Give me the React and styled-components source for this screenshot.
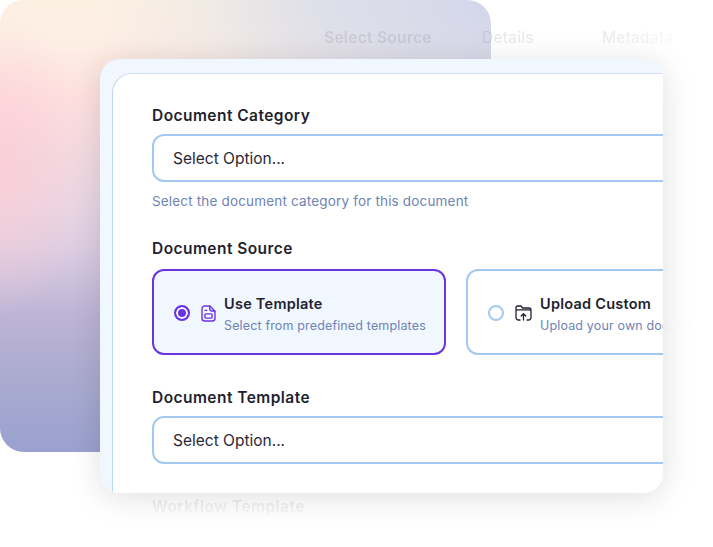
import React from "react";
import styled, { createGlobalStyle } from "styled-components";

const GlobalStyle = createGlobalStyle`
  html, body {
    margin: 0;
    padding: 0;
    background: #fff;
  }
  body {
    font-family: "Inter", "Noto Sans", sans-serif;
    color: #231f2e;
  }
`;

const FileIcon = () => (
  <svg width="15" height="17" viewBox="0 0 15 17" fill="none" stroke="#6a35e0" strokeWidth="1.4" strokeLinecap="round" strokeLinejoin="round">
    <path d="M8.8 1H3.8A2.8 2.8 0 0 0 1 3.8v9.4A2.8 2.8 0 0 0 3.8 16h7.4a2.8 2.8 0 0 0 2.8-2.8V6.2z" />
    <path d="M8.8 1.2v2.6a2.2 2.2 0 0 0 2.2 2.2h2.8" />
    <path d="M4 5.4h1.8" />
    <rect x="3.9" y="8.9" width="7.2" height="4.2" rx="1.2" />
  </svg>
);

const FolderIcon = () => (
  <svg width="17" height="16" viewBox="0 0 17 16" fill="none" stroke="#231f2e" strokeWidth="1.3" strokeLinecap="round" strokeLinejoin="round">
    <path d="M1 5V3a2 2 0 0 1 2-2h3l1.6 2H14a2 2 0 0 1 2 2" />
    <path d="M5 15H3.4A2.4 2.4 0 0 1 1 12.6V6.4A1.6 1.6 0 0 1 2.6 4.8h11.8A1.6 1.6 0 0 1 16 6.4v6.2a2.4 2.4 0 0 1-2.4 2.4H12" />
    <path d="M8.5 15V9M6.2 11l2.3-2.3 2.3 2.3" />
  </svg>
);

const DocumentForm = () => (
  <Form>
    <Field $tight>
      <Label>Document Category</Label>
      <SelectBox>Select Option...</SelectBox>
      <Hint>Select the document category for this document</Hint>
    </Field>
    <Field>
      <Label>Document Source</Label>
      <SourceRow>
        <SourceCard $active>
          <Radio $active />
          <IconSlot><FileIcon /></IconSlot>
          <SourceText>
            <SourceTitle>Use Template</SourceTitle>
            <SourceSub>Select from predefined templates</SourceSub>
          </SourceText>
        </SourceCard>
        <SourceCard>
          <Radio />
          <IconSlot><FolderIcon /></IconSlot>
          <SourceText>
            <SourceTitle>Upload Custom</SourceTitle>
            <SourceSub>Upload your own document</SourceSub>
          </SourceText>
        </SourceCard>
      </SourceRow>
    </Field>
    <Field>
      <Label>Document Template</Label>
      <SelectBox>Select Option...</SelectBox>
    </Field>
    <Field>
      <Label>Workflow Template</Label>
    </Field>
  </Form>
);

export default function App() {
  return (
    <>
      <GlobalStyle />
      <Stage>
        <GradientPanel />
        <GhostLayer>
          <Steps>
            <Step $current>Select Source</Step>
            <Step>Details</Step>
            <Step>Metadata</Step>
          </Steps>
          <DocumentForm />
        </GhostLayer>
        <Card>
          <CardInner>
            <DocumentForm />
          </CardInner>
        </Card>
      </Stage>
    </>
  );
}

const Stage = styled.div`
  position: relative;
  width: 713px;
  height: 547px;
  overflow: hidden;
  background: #fff;
`;

const GradientPanel = styled.div`
  position: absolute;
  left: 0;
  top: 0;
  width: 491px;
  height: 452px;
  border-radius: 24px;
  background:
    radial-gradient(280px 260px at 491px 0, #d2d6eb 0%, rgba(210, 214, 235, 0) 100%),
    radial-gradient(240px 150px at 340px 0, #e4e4e8 0%, rgba(228, 228, 232, 0) 100%),
    radial-gradient(90px 150px at 0 165px, rgba(252, 204, 214, 0.85) 0%, rgba(252, 204, 214, 0) 100%),
    linear-gradient(180deg, #fcf0e2 0%, #fdeee4 10%, #fee0df 22%, #e8d6e3 45%, #dccde2 55%, #bdb4d6 70%, #a9aacf 85%, #9aa1d0 100%);
`;

const GhostLayer = styled.div`
  position: absolute;
  inset: 0;
  padding-top: 28px;
  opacity: 0.1;
  mask-image:
    linear-gradient(to right, #000 0, #000 600px, transparent 700px),
    linear-gradient(to bottom, #000 0, #000 495px, transparent 525px);
  mask-composite: intersect;
`;

const Steps = styled.div`
  display: grid;
  grid-template-columns: 158px 120px auto;
  padding-left: 324px;
  height: 20px;
  margin-bottom: 57px;
`;

const Step = styled.div`
  font-size: 15.5px;
  line-height: 20px;
  letter-spacing: 0.3px;
  font-weight: ${(p) => (p.$current ? 600 : 400)};
  white-space: nowrap;
`;

const Card = styled.div`
  position: absolute;
  left: 100px;
  top: 59px;
  width: 563px;
  height: 434px;
  box-sizing: border-box;
  padding: 14px 0 0 12px;
  overflow: hidden;
  border-radius: 20px;
  background: #f1f7fe;
  box-shadow: 0 4px 32px rgba(0, 0, 0, 0.13);
`;

const CardInner = styled.div`
  height: 100%;
  box-sizing: border-box;
  padding-top: 31px;
  border-top: 1px solid #cfddf1;
  border-left: 1px solid #bcd6f5;
  border-top-left-radius: 20px;
  background: #fff;
`;

const Form = styled.div`
  display: flex;
  flex-direction: column;
  padding-left: 152px;
  width: 640px;

  ${CardInner} & {
    padding-left: 39px;
  }
`;

const Field = styled.div`
  margin-bottom: ${(p) => (p.$tight ? 27 : 32)}px;
`;

const Label = styled.div`
  font-size: 15.5px;
  line-height: 20px;
  letter-spacing: 0.45px;
  font-weight: 600;
  color: #231f2e;
  padding-top: 1px;
  margin-bottom: 8px;
  white-space: nowrap;
`;

const SelectBox = styled.div`
  height: 48px;
  box-sizing: border-box;
  padding: 1px 0 0 19px;
  display: flex;
  align-items: center;
  border: 2px solid #a3c9f3;
  border-radius: 12px;
  background: #fff;
  font-size: 15.5px;
  color: #2b2736;
`;

const Hint = styled.div`
  margin-top: 9px;
  font-size: 13.5px;
  line-height: 20px;
  letter-spacing: 0.17px;
  color: #6f83b5;
  white-space: nowrap;
`;

const SourceRow = styled.div`
  display: flex;
  gap: 20px;
  margin-top: 10px;
`;

const SourceCard = styled.div`
  flex: 0 0 294px;
  height: 86px;
  box-sizing: border-box;
  display: flex;
  align-items: center;
  padding: 2px 0 0 20px;
  border: 2px solid ${(p) => (p.$active ? "#6a35e0" : "#a3c9f3")};
  border-radius: 12px;
  background: ${(p) => (p.$active ? "#f1f7fe" : "#fff")};
`;

const Radio = styled.span`
  width: 16px;
  height: 16px;
  box-sizing: border-box;
  flex: none;
  border-radius: 50%;
  border: 2px solid ${(p) => (p.$active ? "#6a35e0" : "#a3c9f3")};
  background: ${(p) => (p.$active ? "#6a35e0" : "#fff")};
  box-shadow: ${(p) => (p.$active ? "inset 0 0 0 2px #fff" : "none")};
`;

const IconSlot = styled.span`
  display: flex;
  flex: none;
  margin: 0 8px 0 11px;
`;

const SourceText = styled.div`
  display: flex;
  flex-direction: column;
  gap: 3px;
  padding-top: 2px;
  white-space: nowrap;
`;

const SourceTitle = styled.div`
  font-size: 14.5px;
  line-height: 19px;
  letter-spacing: 0.25px;
  font-weight: 600;
  color: #231f2e;
`;

const SourceSub = styled.div`
  font-size: 12.5px;
  line-height: 19px;
  letter-spacing: 0.15px;
  color: #6f83b5;
`;
